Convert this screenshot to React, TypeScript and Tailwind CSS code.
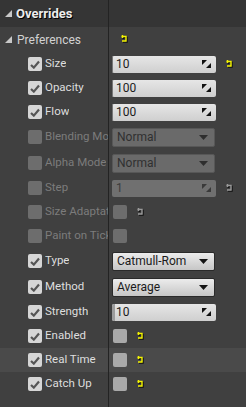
import type { ReactNode } from 'react';

const font = { fontFamily: 'Roboto, "Noto Sans", sans-serif' };

function Arrow() {
  return (
    <svg width="7" height="7" viewBox="0 0 7 7" className="shrink-0">
      <polygon points="7,0 7,7 0,7" fill="#c8c8c8" />
    </svg>
  );
}

function ResetIcon({ muted = false }: { muted?: boolean }) {
  const c = muted ? '#9a9a9a' : '#f4f400';
  return (
    <svg width="9" height="9" viewBox="0 0 9 9" className="shrink-0">
      <g fill="none" stroke="#111" strokeWidth="1.4" transform="translate(1 1)">
        <path d="M1.5 1.5 H6 V6 H2" />
        <path d="M2.5 0 V3" />
      </g>
      <g fill="none" stroke={c} strokeWidth="1.4">
        <path d="M1.5 1.5 H6 V6 H2" />
        <path d="M2.5 0 V3" />
      </g>
    </svg>
  );
}

function DragIcon({ muted = false }: { muted?: boolean }) {
  const c = muted ? '#3a3a3a' : '#111';
  return (
    <svg width="9" height="8" viewBox="0 0 9 8" className="shrink-0">
      <polygon points="0,0 5,0 0,5" fill={c} />
      <polygon points="9,8 4,8 9,3" fill={c} />
      <polygon points="1,1 3.5,1 1,3.5" fill={c} />
    </svg>
  );
}

function Check({ on = true, disabled = false, light = false }: { on?: boolean; disabled?: boolean; light?: boolean }) {
  const bg = disabled ? 'bg-[#6d6d6d]' : light ? 'bg-[#a9a9a9]' : 'bg-[#d6d6d6]';
  return (
    <div className={`w-[14px] h-[14px] rounded-[2px] shrink-0 flex items-center justify-center ${bg}`}>
      {on && !disabled && (
        <svg width="10" height="9" viewBox="0 0 10 9">
          <path d="M1 5 L3.8 7.6 L9 1.5" fill="none" stroke="#555" strokeWidth="2.2" />
        </svg>
      )}
    </div>
  );
}

function NumBox({ value, disabled = false, bar = false }: { value: string; disabled?: boolean; bar?: boolean }) {
  return (
    <div
      className={`relative w-[104px] h-[17px] rounded-[2px] flex items-center pl-[4px] pr-[5px] text-[12px] ${
        disabled
          ? 'bg-[#707070] text-[#3c3c3c]'
          : 'bg-gradient-to-b from-[#e6e6e6] to-[#cfcfcf] text-[#1c1c1c]'
      }`}
    >
      {bar && <div className="absolute left-0 top-0 bottom-0 w-[3px] rounded-l-[2px] bg-[#9c9c9c]" />}
      {!bar && !disabled && <div className="absolute left-0 top-[1px] bottom-[1px] w-[1px] bg-[#777]" />}
      <span className="flex-1 leading-none">{value}</span>
      <DragIcon muted={disabled} />
    </div>
  );
}

function Combo({ value, disabled = false }: { value: string; disabled?: boolean }) {
  return (
    <div
      className={`w-[103px] h-[19px] rounded-[2px] border flex items-center pl-[4px] pr-[6px] text-[12px] ${
        disabled
          ? 'bg-[#6a6a6a] border-[#575757] text-[#303030]'
          : 'bg-gradient-to-b from-[#ececec] to-[#c6c6c6] border-[#2a2a2a] text-[#1a1a1a]'
      }`}
    >
      <span className="flex-1 leading-none">{value}</span>
      <svg width="9" height="5" viewBox="0 0 9 5">
        <polygon points="0,0 9,0 4.5,5" fill={disabled ? '#2e2e2e' : '#151515'} />
      </svg>
    </div>
  );
}

function Row({
  label,
  checked = true,
  disabled = false,
  h = 'h-[24px]',
  hl = false,
  children,
}: {
  label: string;
  checked?: boolean;
  disabled?: boolean;
  h?: string;
  hl?: boolean;
  children?: ReactNode;
}) {
  return (
    <div className={`flex ${h} ${hl ? 'bg-[#4a4a4a]' : ''}`}>
      <div className="w-[109px] shrink-0 border-r border-[#232323] flex items-center pl-[28px] gap-[3px] overflow-hidden">
        <Check on={checked} disabled={disabled} />
        <span
          className={`min-w-0 overflow-hidden text-[11.5px] whitespace-nowrap ${
            disabled ? 'text-[#7c7c7c]' : 'text-[#dedede]'
          }`}
        >
          {label}
        </span>
      </div>
      <div className="flex-1 flex items-center pl-[3px] gap-[9px]">{children}</div>
    </div>
  );
}

export default function App() {
  return (
    <div className="w-[246px] h-[407px] bg-[#404040] overflow-hidden select-none" style={font}>
      <div className="flex h-[27px] bg-[#353535]">
        <div className="w-[109px] shrink-0 border-r border-[#232323] flex items-center pl-[5px] gap-[4px]">
          <Arrow />
          <span className="text-[13px] font-bold text-[#ececec] [text-shadow:1px_1px_0_#000]">Overrides</span>
        </div>
      </div>
      <div className="flex h-[25px]">
        <div className="w-[109px] shrink-0 border-r border-[#232323] flex items-center pl-[5px] gap-[5px]">
          <Arrow />
          <span className="text-[12px] text-[#d2d2d2]">Preferences</span>
        </div>
        <div className="flex-1 flex items-center pl-[11px]">
          <ResetIcon />
        </div>
      </div>
      <Row label="Size">
        <NumBox value="10" />
        <ResetIcon />
      </Row>
      <Row label="Opacity">
        <NumBox value="100" />
      </Row>
      <Row label="Flow">
        <NumBox value="100" />
      </Row>
      <Row label="Blending Mode" checked={false} disabled h="h-[26px]">
        <Combo value="Normal" disabled />
      </Row>
      <Row label="Alpha Mode" checked={false} disabled h="h-[26px]">
        <Combo value="Normal" disabled />
      </Row>
      <Row label="Step" checked={false} disabled>
        <NumBox value="1" disabled />
        <ResetIcon muted />
      </Row>
      <Row label="Size Adaptation" checked={false} disabled>
        <div className="pl-[1px] flex items-center gap-[9px]">
          <Check on={false} disabled />
          <ResetIcon muted />
        </div>
      </Row>
      <Row label="Paint on Tick" checked={false} disabled>
        <div className="pl-[1px]">
          <Check on={false} disabled />
        </div>
      </Row>
      <Row label="Type" h="h-[26px]">
        <Combo value="Catmull-Rom" />
      </Row>
      <Row label="Method" h="h-[26px]">
        <Combo value="Average" />
      </Row>
      <Row label="Strength">
        <NumBox value="10" bar />
      </Row>
      <Row label="Enabled">
        <div className="pl-[1px] flex items-center gap-[9px]">
          <Check on={false} light />
          <ResetIcon />
        </div>
      </Row>
      <Row label="Real Time" hl>
        <div className="pl-[1px] flex items-center gap-[9px]">
          <Check on={false} light />
          <ResetIcon />
        </div>
      </Row>
      <Row label="Catch Up">
        <div className="pl-[1px] flex items-center gap-[9px]">
          <Check on={false} light />
          <ResetIcon />
        </div>
      </Row>
      <div className="flex h-[20px]">
        <div className="w-[109px] shrink-0 border-r border-[#232323]" />
      </div>
    </div>
  );
}
